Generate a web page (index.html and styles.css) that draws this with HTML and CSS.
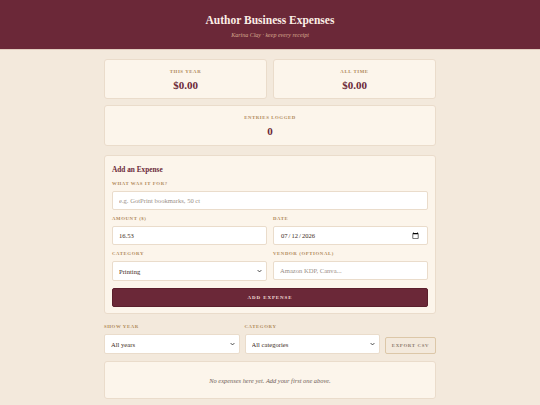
FILE: index.html
```html
<!DOCTYPE html>
<html lang="en">
<head>
  <meta charset="UTF-8" />
  <meta name="viewport" content="width=device-width, initial-scale=1.0"/>
  <title>Author Business Expenses</title>
  <link rel="stylesheet" href="styles.css">
</head>
<body>
  <header class="masthead">
    <h1>Author Business Expenses</h1>
    <p class="tagline">Karina Clay · keep every receipt</p>
  </header>

  <main class="wrap">
    <div class="stats">
      <div class="stat">
        <div class="stat-label">This Year</div>
        <div class="stat-value">$0.00</div>
      </div>
      <div class="stat">
        <div class="stat-label">All Time</div>
        <div class="stat-value">$0.00</div>
      </div>
      <div class="stat wide">
        <div class="stat-label">Entries Logged</div>
        <div class="stat-value">0</div>
      </div>
    </div>

    <form class="card form-card">
      <h2>Add an Expense</h2>
      <div class="field">
        <label>What was it for?</label>
        <input type="text" placeholder="e.g. GotPrint bookmarks, 50 ct">
      </div>
      <div class="row">
        <div class="field">
          <label>Amount ($)</label>
          <input type="text" value="16.53">
        </div>
        <div class="field">
          <label>Date</label>
          <input type="date" value="2026-07-12">
        </div>
      </div>
      <div class="row">
        <div class="field">
          <label>Category</label>
          <div class="select-wrap">
            <select><option>Printing</option></select>
            <svg class="chev" viewBox="0 0 8 5"><path d="M1 1l3 3 3-3" fill="none" stroke="#333" stroke-width="1.4"/></svg>
          </div>
        </div>
        <div class="field">
          <label>Vendor (optional)</label>
          <input type="text" placeholder="Amazon KDP, Canva...">
        </div>
      </div>
      <button type="button" class="btn-primary">Add Expense</button>
    </form>

    <div class="filters">
      <div class="field">
        <label>Show Year</label>
        <div class="select-wrap">
          <select><option>All years</option></select>
          <svg class="chev" viewBox="0 0 8 5"><path d="M1 1l3 3 3-3" fill="none" stroke="#333" stroke-width="1.4"/></svg>
        </div>
      </div>
      <div class="field">
        <label>Category</label>
        <div class="select-wrap">
          <select><option>All categories</option></select>
          <svg class="chev" viewBox="0 0 8 5"><path d="M1 1l3 3 3-3" fill="none" stroke="#333" stroke-width="1.4"/></svg>
        </div>
      </div>
      <button type="button" class="btn-ghost">Export CSV</button>
    </div>

    <div class="card empty">No expenses here yet. Add your first one above.</div>
  </main>
</body>
</html>
```

FILE: styles.css
```css
:root {
  --wine: #6b2838;
  --paper: #f3e9dc;
  --card: #fcf5eb;
  --line: #eadccb;
  --gold: #b0895a;
  --ink: #3d2a22;
}

* {
  margin: 0;
  padding: 0;
  box-sizing: border-box;
}

body {
  background: var(--paper);
  font-family: "Liberation Serif", "DejaVu Serif", serif;
  color: var(--ink);
}

.masthead {
  background: var(--wine);
  height: 50px;
  text-align: center;
  padding-top: 13px;
  border-bottom: 1px solid #e2cdbf;
}

.masthead h1 {
  color: #fbeee6;
  font-size: 11.5px;
  font-weight: bold;
  line-height: 14px;
}

.tagline {
  color: #d8a98f;
  font-size: 6px;
  font-style: italic;
  margin-top: 5px;
}

.wrap {
  width: 332px;
  margin: 0 auto;
  padding-top: 9px;
}

.stats {
  display: grid;
  grid-template-columns: 1fr 1fr;
  gap: 6px;
}

.stat {
  background: var(--card);
  border: 1px solid var(--line);
  border-radius: 3px;
  height: 40px;
  text-align: center;
  padding-top: 9px;
}

.stat.wide {
  grid-column: span 2;
  height: 41px;
}

.stat-label,
label {
  display: block;
  font-size: 4.8px;
  line-height: 6px;
  font-weight: bold;
  letter-spacing: 0.6px;
  text-transform: uppercase;
  color: var(--gold);
}

.stat-value {
  color: var(--wine);
  font-size: 11px;
  font-weight: bold;
  margin-top: 4px;
}

.card {
  background: var(--card);
  border: 1px solid var(--line);
  border-radius: 3px;
}

.form-card {
  margin-top: 9px;
  padding: 9px 7px 6px;
  display: flex;
  flex-direction: column;
  gap: 6px;
}

.form-card h2 {
  color: var(--wine);
  font-size: 7.3px;
  line-height: 9px;
  font-weight: bold;
  margin-bottom: 1px;
}

.field {
  display: flex;
  flex-direction: column;
  gap: 4px;
}

.row {
  display: grid;
  grid-template-columns: 1fr 1fr;
  gap: 6px;
}

input,
select {
  display: block;
  font-family: "Liberation Serif", "DejaVu Serif", serif;
  font-size: 6.6px;
  color: var(--ink);
  height: 19px;
  padding: 0 6px;
  background: #fff;
  border: 1px solid var(--line);
  border-radius: 2px;
  width: 100%;
}

input::placeholder {
  color: #9a8f88;
}

.select-wrap {
  position: relative;
}

select {
  appearance: none;
  -webkit-appearance: none;
  height: 20px;
}

.chev {
  position: absolute;
  right: 5px;
  top: 8px;
  width: 5px;
  height: 4px;
  pointer-events: none;
}

.btn-primary {
  margin-top: 1px;
  height: 19px;
  background: var(--wine);
  color: #f3dcd7;
  border: 1px solid #5a1f2c;
  border-radius: 2px;
  font-family: "Liberation Serif", "DejaVu Serif", serif;
  font-size: 5px;
  font-weight: bold;
  letter-spacing: 0.9px;
  text-transform: uppercase;
}

.filters {
  display: flex;
  align-items: flex-end;
  gap: 5px;
  margin-top: 10px;
}

.filters .field {
  flex: 1;
}

.btn-ghost {
  width: 51px;
  height: 17px;
  background: transparent;
  border: 1px solid #dcc7a8;
  border-radius: 2px;
  color: #8c7a6e;
  font-family: "Liberation Serif", "DejaVu Serif", serif;
  font-size: 4.8px;
  font-weight: bold;
  letter-spacing: 0.7px;
  text-transform: uppercase;
}

.empty {
  margin-top: 7px;
  height: 38px;
  display: flex;
  align-items: center;
  justify-content: center;
  font-size: 6.4px;
  font-style: italic;
  color: #6f6058;
}
```
